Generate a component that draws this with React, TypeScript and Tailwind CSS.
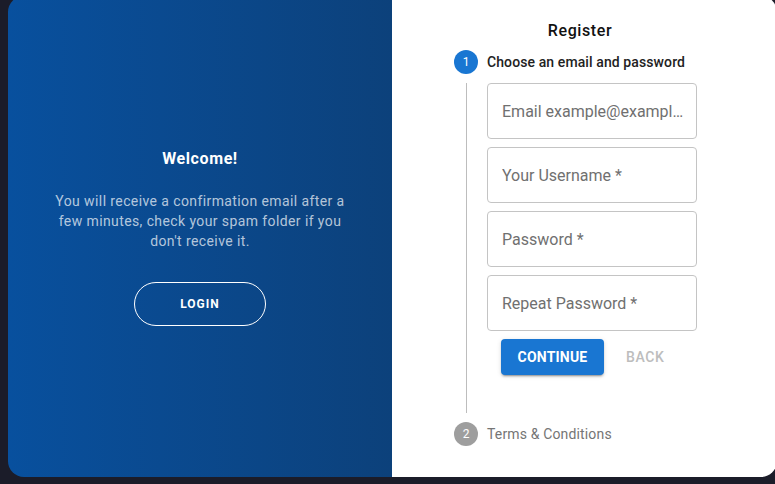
import React from 'react';

const fields = ['Email example@example.com', 'Your Username *', 'Password *', 'Repeat Password *'];

const App: React.FC = () => {
  return (
    <div className="h-[484px] w-full overflow-hidden bg-[#1b1c29] pl-2 font-['Roboto',sans-serif]">
      <div className="-mt-1 flex h-[481px] w-[769px] overflow-hidden rounded-2xl">
        {/* welcome side */}
        <div className="flex w-[384px] flex-col items-center justify-center bg-gradient-to-r from-[#08509e] to-[#0c417b] pt-[2px] text-center">
          <h2 className="text-[16px] font-bold leading-5 tracking-[0.6px] text-white">Welcome!</h2>
          <p className="mt-[22px] w-[298px] text-[14px] leading-5 tracking-[0.4px] text-white/70">
            You will receive a confirmation email after a few minutes, check your spam folder if you don't receive it.
          </p>
          <button className="mt-[31px] h-[44px] w-[132px] rounded-[22px] border border-white text-[12px] font-bold tracking-[1px] text-white">
            LOGIN
          </button>
        </div>

        {/* register side */}
        <div className="flex-1 bg-white pl-[62px] pt-[25px]">
          <h1 className="w-[252px] text-center text-[16px] font-medium leading-5 tracking-[0.6px] text-[#111]">
            Register
          </h1>

          <div className="mt-[9px] flex items-center">
            <div className="flex h-6 w-6 items-center justify-center rounded-full bg-[#1976d2] text-[12px] text-white">1</div>
            <span className="ml-[9px] text-[14px] font-medium tracking-[0.1px] text-[#222]">Choose an email and password</span>
          </div>

          <div className="ml-3 mt-[9px] border-l border-[#bdbdbd] pb-[38px] pl-5">
            <div className="flex flex-col gap-2">
              {fields.map((f) => (
                <input
                  key={f}
                  placeholder={f}
                  className="h-14 w-[210px] truncate rounded border border-[#c4c4c4] pl-[14px] pr-[8px] text-[16px] text-[#333] outline-none placeholder:text-[#707070]"
                />
              ))}
            </div>
            <div className="ml-[14px] mt-2 flex items-center">
              <button className="h-9 w-[103px] rounded bg-[#1976d2] text-[14px] font-bold tracking-[0.2px] text-white shadow-[0_3px_1px_-2px_rgba(0,0,0,0.2),0_2px_2px_0_rgba(0,0,0,0.14),0_1px_5px_0_rgba(0,0,0,0.12)]">
                CONTINUE
              </button>
              <span className="ml-[22px] text-[14px] font-medium tracking-[0.6px] text-[#bdbdbd]">BACK</span>
            </div>
          </div>

          <div className="mt-[9px] flex items-center">
            <div className="flex h-6 w-6 items-center justify-center rounded-full bg-[#9e9e9e] text-[12px] text-white">2</div>
            <span className="ml-[9px] text-[14px] tracking-[0.15px] text-[#757575]">Terms &amp; Conditions</span>
          </div>
        </div>
      </div>
    </div>
  );
};

export default App;
